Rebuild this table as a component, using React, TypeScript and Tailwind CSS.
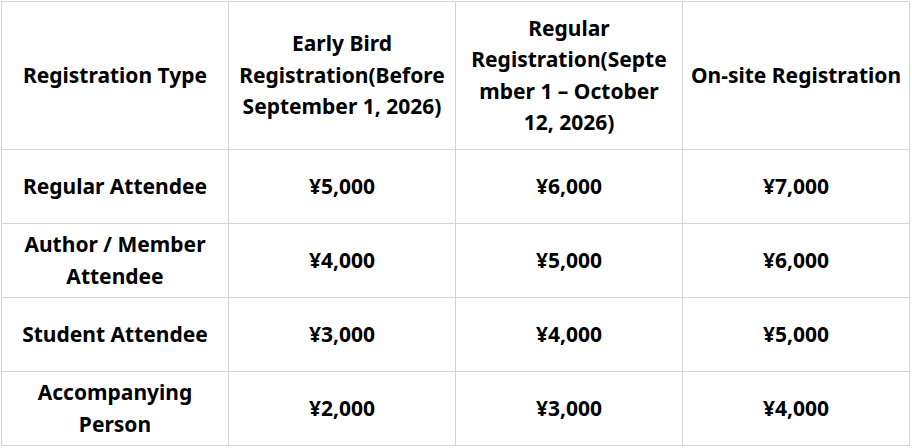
const headers = [
  'Registration Type',
  'Early Bird Registration(Before September 1, 2026)',
  'Regular Registration(September 1 – October 12, 2026)',
  'On-site Registration',
];

const rows = [
  ['Regular Attendee', '¥5,000', '¥6,000', '¥7,000'],
  ['Author / Member Attendee', '¥4,000', '¥5,000', '¥6,000'],
  ['Student Attendee', '¥3,000', '¥4,000', '¥5,000'],
  ['Accompanying Person', '¥2,000', '¥3,000', '¥4,000'],
];

export default function App() {
  return (
    <div className="h-[448px] w-[912px] bg-white pl-px pt-px">
      <table
        className="w-[909px] table-fixed border-collapse text-center text-[21px] font-bold leading-[31.5px] text-black"
        style={{ fontFamily: '"Noto Sans", "Noto Sans CJK SC", sans-serif' }}
      >
        <colgroup>
          <col className="w-[227px]" />
          <col className="w-[227px]" />
          <col className="w-[227px]" />
          <col className="w-[227px]" />
        </colgroup>
        <thead>
          <tr className="h-[148px]">
            {headers.map((h) => (
              <th key={h} className="border border-[#d4d4d4] px-1.5 align-middle font-bold break-words">
                {h}
              </th>
            ))}
          </tr>
        </thead>
        <tbody>
          {rows.map((r) => (
            <tr key={r[0]} className="h-[74px]">
              {r.map((c, i) => (
                <td key={i} className="border border-[#d4d4d4] px-1.5 align-middle break-words">
                  {c}
                </td>
              ))}
            </tr>
          ))}
        </tbody>
      </table>
    </div>
  );
}
